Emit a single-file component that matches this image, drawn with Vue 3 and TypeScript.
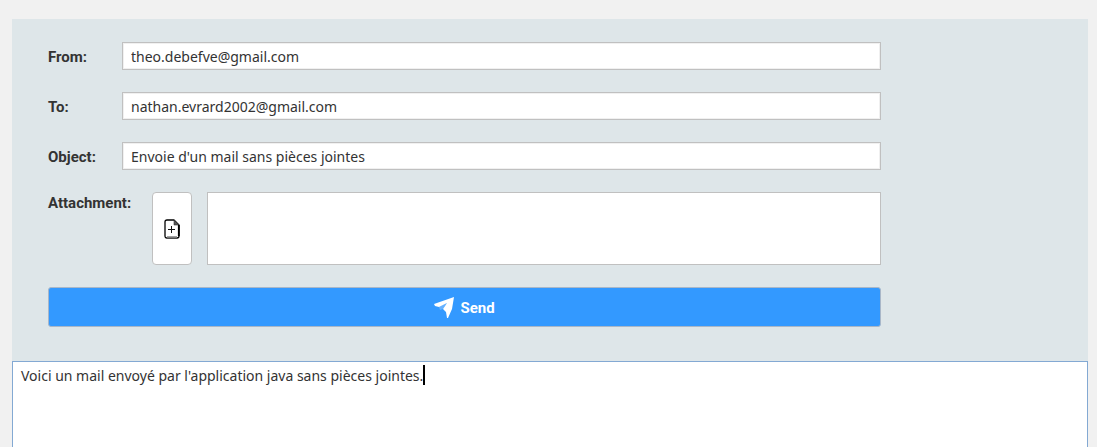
<script setup lang="ts">
import { computed, onMounted, ref } from 'vue'

interface Field {
  id: string
  label: string
  type: string
  value: string
}

const fields = ref<Field[]>([
  { id: 'from', label: 'From:', type: 'email', value: 'theo.debefve@gmail.com' },
  { id: 'to', label: 'To:', type: 'email', value: 'nathan.evrard2002@gmail.com' },
  { id: 'object', label: 'Object:', type: 'text', value: "Envoie d'un mail sans pièces jointes" },
])
const message = ref("Voici un mail envoyé par l'application java sans pièces jointes.")
const body = ref<HTMLTextAreaElement | null>(null)
const font = ref('')

// The caret follows the end of the last line of the message.
const caretLeft = computed(() => {
  const context = document.createElement('canvas').getContext('2d')
  if (!context || !font.value) return 0
  context.font = font.value
  const lines = message.value.split('\n')
  return Math.round(context.measureText(lines[lines.length - 1]).width)
})

onMounted(() => {
  if (body.value) {
    const style = getComputedStyle(body.value)
    font.value = `${style.fontSize} ${style.fontFamily}`
  }
})
</script>

<template>
  <main class="window">
    <form class="panel" @submit.prevent>
      <div class="fields">
        <div v-for="field in fields" :key="field.id" class="row">
          <label class="label" :for="field.id">{{ field.label }}</label>
          <input :id="field.id" v-model="field.value" class="input" :type="field.type" spellcheck="false" />
        </div>
        <div class="row attachment">
          <label class="label attachment-label" for="files">Attachment:</label>
          <button class="add" type="button" aria-label="Add attachment">
            <svg width="16" height="20" viewBox="0 0 16 20" fill="none" stroke="#000">
              <path d="M3 1H10L15 6V17Q15 19 13 19H3Q1 19 1 17V3Q1 1 3 1Z" stroke-width="1.3" stroke-linejoin="round" />
              <path d="M3 18.3H13" stroke="#777" stroke-width="2" />
              <path d="M10 1L15 6H10Z" fill="#555" stroke="#333" stroke-width="0.6" />
              <path d="M14.8 6V17" stroke-width="1.8" />
              <path d="M4 10.5H11M7.5 7V14" stroke="#111" stroke-width="1" />
            </svg>
          </button>
          <textarea id="files" class="files" readonly></textarea>
        </div>
        <button class="send" type="submit">
          <svg width="20" height="21" viewBox="0 0 20 21" fill="#fff">
            <path d="M20 0L0 7L1 9L5 10L13 6L9 12L12 15L13 21H14L18 12Z" />
            <path d="M5 10L13 6L9 12L6 13Z" fill-opacity="0.25" />
          </svg>
          <span class="send-text">Send</span>
        </button>
      </div>
    </form>
    <div class="message">
      <textarea ref="body" v-model="message" class="body" aria-label="Message" spellcheck="false"></textarea>
      <span class="caret" :style="{ left: `${caretLeft + 9}px` }"></span>
    </div>
  </main>
</template>

<style>
body {
  margin: 0;
  background: #f1f1f1;
}
</style>

<style scoped>
.window {
  box-sizing: border-box;
  height: 100vh;
  padding: 19px 9px 0 12px;
  display: flex;
  flex-direction: column;
  overflow: hidden;
  color: #333;
  font-family: Roboto, "Liberation Sans", Arial, sans-serif;
}
.window * {
  box-sizing: border-box;
}
.panel {
  flex: none;
  padding: 23px 36px 34px;
  background: #dee6e9;
}
.fields {
  max-width: 833px;
  display: flex;
  flex-direction: column;
  gap: 22px;
}
.row {
  display: flex;
  align-items: center;
}
.label {
  flex: none;
  width: 74px;
  padding-top: 2px;
  font-size: 15px;
  font-weight: 700;
  line-height: 18px;
}
.input,
.body {
  font-family: "Noto Sans", "Open Sans", sans-serif;
  font-size: 14px;
  color: #333;
}
.input {
  flex: 1;
  min-width: 0;
  height: 28px;
  padding: 0 8px;
  border: 1px solid #c0c0c0;
  border-radius: 0;
  outline: none;
  background: #fff;
  box-shadow: inset 0 0 0 1px #f0f0f0;
}
.attachment {
  align-items: stretch;
}
.attachment-label {
  width: 104px;
}
.add {
  flex: none;
  width: 40px;
  height: 73px;
  margin-right: 15px;
  padding: 0;
  display: flex;
  align-items: center;
  justify-content: center;
  border: 1px solid #c0c0c0;
  border-radius: 4px;
  background: #fff;
}
.files {
  flex: 1;
  min-width: 0;
  height: 73px;
  border: 1px solid #c0c0c0;
  border-radius: 0;
  outline: none;
  resize: none;
  background: #fff;
}
.send {
  height: 40px;
  padding: 0;
  display: flex;
  align-items: center;
  justify-content: center;
  gap: 6px;
  border: 1px solid #a9b7c8;
  border-radius: 3px;
  background: #3399ff;
  color: #fff;
  font-family: inherit;
  font-size: 15px;
  font-weight: 700;
}
.send-text {
  padding-top: 2px;
}
.message {
  flex: 1;
  min-height: 0;
  display: flex;
  position: relative;
}
.body {
  flex: 1;
  min-width: 0;
  padding: 4px 8px;
  border: 1px solid #83a9d3;
  border-bottom: 0;
  border-radius: 0;
  outline: none;
  resize: none;
  background: #fff;
  line-height: 20px;
}
.caret {
  position: absolute;
  top: 4px;
  width: 2px;
  height: 20px;
  background: #000;
  pointer-events: none;
}
</style>
